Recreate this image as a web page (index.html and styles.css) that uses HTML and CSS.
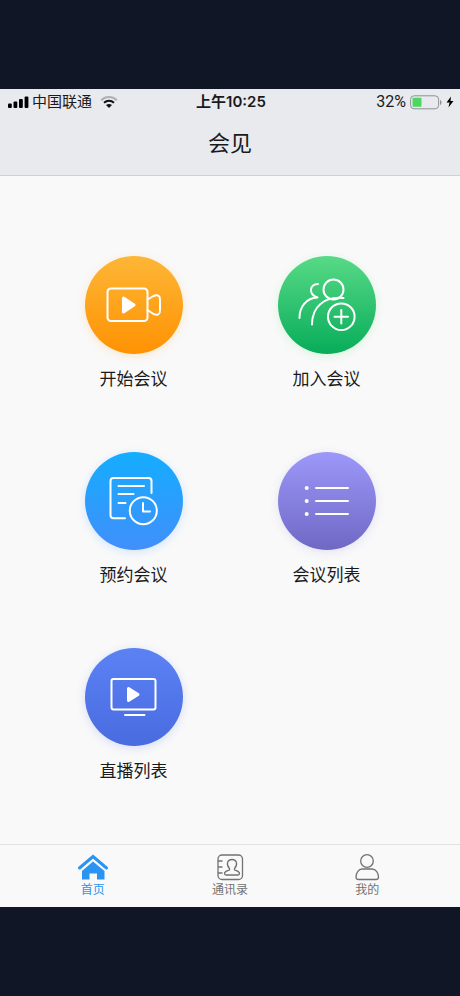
FILE: index.html
```html
<!DOCTYPE html>
<html lang="zh-CN">
<head>
<meta charset="utf-8">
<meta name="viewport" content="width=device-width, initial-scale=1">
<title>会见</title>
<link rel="stylesheet" href="styles.css">
</head>
<body>
<div class="app">
  <header class="header">
    <div class="status">
      <div class="status-side">
        <svg class="signal" width="22" height="14" viewBox="0 0 22 14" aria-hidden="true">
          <rect x="0" y="8.500" width="3.800" height="4.500" rx="1"/><rect x="5.500" y="6.500" width="3.800" height="6.500" rx="1"/><rect x="11" y="4" width="3.800" height="9" rx="1"/><rect x="16.600" y="1.500" width="3.800" height="11.500" rx="1"/>
        </svg>
        <span class="carrier">中国联通</span>
        <svg class="wifi" width="18" height="12" viewBox="0 0 18 12" aria-hidden="true">
          <path class="wifi-weak" d="M1.200 4.200C5.500 0 12.500 0 16.800 4.200"/>
          <path class="wifi-mid" d="M4 6.800C7 4.200 11 4.200 14 6.800"/>
          <path d="M9 12L6 9Q9 6.800 12 9Z"/>
        </svg>
      </div>
      <time class="time">上午10:25</time>
      <div class="status-side status-right">
        <span class="charge">32%</span>
        <svg class="battery" width="32" height="15" viewBox="0 0 32 15" aria-hidden="true">
          <rect class="battery-case" x="0.600" y="0.800" width="28" height="13" rx="3.500"/>
          <rect class="battery-level" x="2.500" y="2.800" width="9" height="9" rx="1"/>
          <path class="battery-tip" d="M30 5C32 5.500 32 9.500 30 10Z"/>
        </svg>
        <svg width="8" height="12" viewBox="0 0 8 12" aria-hidden="true"><path d="M5 0.500L0.500 6.500H3.500L2.500 11.500L7.500 5H4.500Z"/></svg>
      </div>
    </div>
    <h1 class="title">会见</h1>
  </header>

  <main class="actions">
    <button class="action" type="button">
      <span class="disc disc-orange">
        <svg viewBox="0 0 98 98" aria-hidden="true">
          <rect x="22.500" y="32.500" width="40" height="32.500" rx="3.500"/>
          <path d="M62.500 43.500L68.500 40Q75 37.500 75 43.500V54.500Q75 60.500 68.500 58L62.500 54"/>
          <path class="solid" d="M38.500 42V56L49 49Z"/>
        </svg>
      </span>
      <span>开始会议</span>
    </button>
    <button class="action" type="button">
      <span class="disc disc-green">
        <svg viewBox="0 0 98 98" aria-hidden="true">
          <circle cx="55.500" cy="33.500" r="10"/>
          <path d="M40 28C32 28 29.500 38 39.500 41.500C28 42 21.500 51 21.500 62"/>
          <path d="M65.500 42C46 40 34 51 34 68.500"/>
          <circle cx="63.300" cy="60.700" r="13.300"/>
          <path d="M56.500 60.700H70M63.300 54V67.500"/>
        </svg>
      </span>
      <span>加入会议</span>
    </button>
    <button class="action" type="button">
      <span class="disc disc-blue">
        <svg viewBox="0 0 98 98" aria-hidden="true">
          <path d="M66.500 41V29Q66.500 26 63.500 26H28.500Q25.500 26 25.500 29V63Q25.500 66.300 28.500 66.300H40M33.500 34H59M33.500 42H48.500M33.500 51H40.500"/>
          <circle cx="58.300" cy="58.700" r="13.500"/>
          <path d="M58 51V59.500H65"/>
        </svg>
      </span>
      <span>预约会议</span>
    </button>
    <button class="action" type="button">
      <span class="disc disc-purple">
        <svg viewBox="0 0 98 98" aria-hidden="true">
          <path d="M38 36H70M38 49H70M38 62H70"/>
          <circle class="dot" cx="28.700" cy="36" r="2"/><circle class="dot" cx="28.700" cy="49" r="2"/><circle class="dot" cx="28.700" cy="62" r="2"/>
        </svg>
      </span>
      <span>会议列表</span>
    </button>
    <button class="action" type="button">
      <span class="disc disc-indigo">
        <svg viewBox="0 0 98 98" aria-hidden="true">
          <rect x="26.500" y="31" width="44" height="30.500" rx="2"/>
          <path d="M40 67H59.500"/>
          <path class="solid" d="M43.500 40.500V52.500L53 46.500Z"/>
        </svg>
      </span>
      <span>直播列表</span>
    </button>
  </main>

  <nav class="tabs">
    <a class="tab tab-active" href="#home" aria-current="page">
      <svg width="32" height="28" viewBox="0 0 32 28" aria-hidden="true">
        <path class="roof" d="M2.500 15L16 3.500L29.500 15"/>
        <path class="house" d="M16 8.500L27.500 18V26.500H20V20.500H12.500V26.500H5V18Z"/>
      </svg>
      <span>首页</span>
    </a>
    <a class="tab" href="#contacts">
      <svg width="32" height="28" viewBox="0 0 32 28" aria-hidden="true">
        <rect x="4" y="2" width="24.500" height="24.500" rx="4"/>
        <path d="M4 8H8.500M4 14H8.500M4 20H8.500"/>
        <path d="M15.500 15.500C12 12 13 6.500 18 6.500S24 12 20.500 15.500V17C23 18 25.500 18.500 25.500 20.500Q25.500 22 24 22H12Q10.500 22 10.500 20.500C10.500 18.500 13 18 15.500 17Z"/>
      </svg>
      <span>通讯录</span>
    </a>
    <a class="tab" href="#me">
      <svg width="32" height="28" viewBox="0 0 32 28" aria-hidden="true">
        <circle cx="16" cy="8" r="6.300"/>
        <path d="M11 16H21C25 16 27.500 20.500 27.500 24Q27.500 26.500 25 26.500H7.500Q5 26.500 5 24C5 20.500 7.500 16 11 16Z"/>
      </svg>
      <span>我的</span>
    </a>
  </nav>
</div>
</body>
</html>
```

FILE: styles.css
```css
* {
  box-sizing: border-box;
}

body {
  margin: 0;
  min-height: 100vh;
  padding: 89px 0;
  display: flex;
  flex-direction: column;
  background: #111627;
  color: #1a1a1c;
  font-family: Inter, "Noto Sans CJK SC", sans-serif;
}

.app {
  flex: 1;
  display: flex;
  flex-direction: column;
  background: #f9f9f9;
}

.header {
  background: #e9eaee;
  border-bottom: 1px solid #cfd0d4;
}

.status {
  display: flex;
  align-items: center;
  height: 26px;
  padding: 0 6px 0 8px;
  font-size: 15px;
  line-height: 20px;
}

.status-side {
  flex: 1;
  display: flex;
  align-items: center;
}

.status-right {
  justify-content: flex-end;
  gap: 4px;
}

.carrier {
  margin: 0 8px 0 2px;
}

.time {
  font-weight: 600;
}

.charge {
  font-family: Roboto, sans-serif;
  font-size: 16px;
}

.wifi path {
  fill: #111;
}

.wifi .wifi-weak {
  fill: none;
  stroke: #aeb0b4;
  stroke-width: 2;
}

.wifi .wifi-mid {
  fill: none;
  stroke: #111;
  stroke-width: 2;
}

.battery-case {
  fill: none;
  stroke: #8f9194;
}

.battery-level {
  fill: #4cd662;
}

.battery-tip {
  fill: #8f9194;
}

.title {
  margin: 0;
  padding: 12px 0 16px;
  font-size: 22px;
  font-weight: 400;
  line-height: 32px;
  text-align: center;
}

.actions {
  flex: 1;
  display: grid;
  grid-template-columns: 1fr 1fr;
  align-content: start;
  row-gap: 60px;
  padding: 80px 37px 0;
}

.action {
  display: flex;
  flex-direction: column;
  align-items: center;
  gap: 12px;
  padding: 0;
  border: 0;
  background: none;
  color: inherit;
  font: inherit;
  font-size: 17px;
  line-height: 26px;
}

.disc {
  width: 98px;
  height: 98px;
  border-radius: 50%;
}

.disc svg {
  display: block;
  fill: none;
  stroke: #fff;
  stroke-width: 2;
  stroke-linecap: round;
  stroke-linejoin: round;
}

.disc .solid {
  fill: #fff;
  stroke-width: 3;
}

.disc .dot {
  fill: #fff;
  stroke: none;
}

.disc-orange {
  background: linear-gradient(#fdb636, #ff9203);
  box-shadow: 0 2px 10px #ff98002e;
}

.disc-green {
  background: linear-gradient(#58da86, #07ac5a);
  box-shadow: 0 2px 10px #4fdc602e;
}

.disc-blue {
  background: linear-gradient(#14adff, #418ffa);
  box-shadow: 0 2px 10px #3096ff33;
}

.disc-purple {
  background: linear-gradient(#9c98fa, #7068c4);
  box-shadow: 0 2px 10px #7c78e02e;
}

.disc-indigo {
  background: linear-gradient(#5b82f5, #496be0);
  box-shadow: 0 2px 10px #4c70e833;
}

.tabs {
  display: flex;
  padding: 8px 24px 9px;
  border-top: 1px solid #e2e2e3;
}

.tab {
  flex: 1;
  display: flex;
  flex-direction: column;
  align-items: center;
  color: #727272;
  font-size: 12px;
  line-height: 17px;
  text-decoration: none;
}

.tab svg {
  fill: none;
  stroke: currentColor;
  stroke-width: 1.3;
}

.tab-active {
  color: #2b93f2;
}

.tab .roof {
  stroke-width: 3;
  stroke-linecap: round;
}

.tab .house {
  fill: currentColor;
  stroke: none;
}
```
